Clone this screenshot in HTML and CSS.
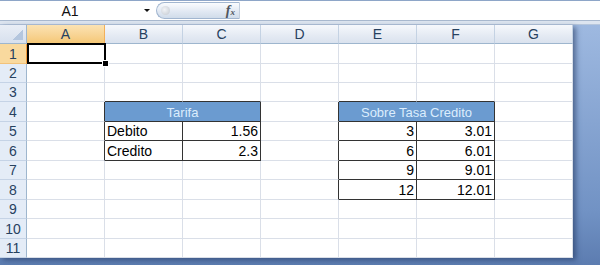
FILE: index.html
```html
<!DOCTYPE html>
<html lang="es">
<head>
    <meta charset="UTF-8">
    <title>Libro1</title>
    <link rel="stylesheet" href="styles.css">
</head>
<body>
    <div class="formula-bar">
        <div class="name-box">
            <span class="name">A1</span>
            <span class="drop"></span>
        </div>
        <div class="fx-pill">
            <span class="knob"></span>
            <span class="fx"><i>f</i><small>x</small></span>
        </div>
        <div class="formula-input"></div>
    </div>
    <div class="band"></div>

    <div class="sheet">
        <!-- cabecera -->
        <div class="corner"></div>
        <div class="col-head sel">A</div>
        <div class="col-head">B</div>
        <div class="col-head">C</div>
        <div class="col-head">D</div>
        <div class="col-head">E</div>
        <div class="col-head">F</div>
        <div class="col-head">G</div>

        <!-- fila 1 -->
        <div class="row-head sel">1</div>
        <div class="cell active"></div>
        <div class="cell"></div><div class="cell"></div><div class="cell"></div>
        <div class="cell"></div><div class="cell"></div><div class="cell"></div>

        <!-- fila 2 -->
        <div class="row-head">2</div>
        <div class="cell"></div><div class="cell"></div><div class="cell"></div><div class="cell"></div>
        <div class="cell"></div><div class="cell"></div><div class="cell"></div>

        <!-- fila 3 -->
        <div class="row-head">3</div>
        <div class="cell"></div>
        <div class="cell bb"></div><div class="cell bb"></div>
        <div class="cell"></div>
        <div class="cell bb"></div><div class="cell bb"></div>
        <div class="cell"></div>

        <!-- fila 4 -->
        <div class="row-head">4</div>
        <div class="cell br"></div>
        <div class="cell merged thead br bb">Tarifa</div>
        <div class="cell br"></div>
        <div class="cell merged thead br bb">Sobre Tasa Credito</div>
        <div class="cell"></div>

        <!-- fila 5 -->
        <div class="row-head">5</div>
        <div class="cell br"></div>
        <div class="cell br bb">Debito</div>
        <div class="cell num br bb">1.56</div>
        <div class="cell br"></div>
        <div class="cell num br bb">3</div>
        <div class="cell num br bb">3.01</div>
        <div class="cell"></div>

        <!-- fila 6 -->
        <div class="row-head">6</div>
        <div class="cell br"></div>
        <div class="cell br bb">Credito</div>
        <div class="cell num br bb">2.3</div>
        <div class="cell br"></div>
        <div class="cell num br bb">6</div>
        <div class="cell num br bb">6.01</div>
        <div class="cell"></div>

        <!-- fila 7 -->
        <div class="row-head">7</div>
        <div class="cell"></div><div class="cell"></div><div class="cell"></div>
        <div class="cell br"></div>
        <div class="cell num br bb">9</div>
        <div class="cell num br bb">9.01</div>
        <div class="cell"></div>

        <!-- fila 8 -->
        <div class="row-head">8</div>
        <div class="cell"></div><div class="cell"></div><div class="cell"></div>
        <div class="cell br"></div>
        <div class="cell num br bb">12</div>
        <div class="cell num br bb">12.01</div>
        <div class="cell"></div>

        <!-- filas 9 a 11 -->
        <div class="row-head">9</div>
        <div class="cell"></div><div class="cell"></div><div class="cell"></div><div class="cell"></div>
        <div class="cell"></div><div class="cell"></div><div class="cell"></div>
        <div class="row-head">10</div>
        <div class="cell"></div><div class="cell"></div><div class="cell"></div><div class="cell"></div>
        <div class="cell"></div><div class="cell"></div><div class="cell"></div>
        <div class="row-head">11</div>
        <div class="cell"></div><div class="cell"></div><div class="cell"></div><div class="cell"></div>
        <div class="cell"></div><div class="cell"></div><div class="cell"></div>
    </div>
</body>
</html>
```

FILE: styles.css
```css
*{
    margin: 0;
    padding: 0;
    box-sizing: border-box;
}
html,body{
    width: 600px;
    height: 265px;
    overflow: hidden;
}
body{
    font-family: "Liberation Sans", Arial, sans-serif;
    font-size: 13px;
    color: #000;
    background: linear-gradient(#a4bee4, #7192c4 80%, #5c7cb0);
}

/* barra de formulas */
.formula-bar{
    height: 21px;
    display: flex;
    background: #fff;
    border-top: 1px solid #8ea6c8;
    border-bottom: 1px solid #a9b9cf;
}
.name-box{
    width: 156px;
    display: flex;
    align-items: center;
}
.name{
    width: 140px;
    text-align: center;
    font-size: 14px;
    color: #111;
}
.drop{
    width: 0;
    height: 0;
    margin-left: 4px;
    border-left: 3px solid transparent;
    border-right: 3px solid transparent;
    border-top: 3px solid #111;
}
.fx-pill{
    width: 84px;
    margin: 1px 0;
    display: flex;
    align-items: center;
    justify-content: space-between;
    padding: 0 4px;
    border: 1px solid #a2b6d0;
    border-right-color: #c3cfde;
    border-radius: 9px 0 0 9px;
    background: linear-gradient(#fafcfe, #e2e9f3 55%, #d0dcea);
}
.knob{
    width: 9px;
    height: 9px;
    border-radius: 50%;
    background: radial-gradient(circle at 40% 40%, #f2f4f7, #c2c8d0);
}
.fx{
    font-family: "Liberation Serif", serif;
    font-size: 14px;
    color: #50555d;
    font-weight: bold;
}
.fx small{
    font-size: 9px;
    font-style: italic;
}
.formula-input{
    flex: 1;
}
.band{
    height: 4px;
    background: #dde5f0;
    border-bottom: 1px solid #b6c6dc;
}

/* hoja */
.sheet{
    width: 573px;
    display: grid;
    grid-template-columns: 27px repeat(7, 78px);
    grid-template-rows: 19px 20px 19px 19px 20px 19px 20px 19px 20px 19px 20px 19px;
    background: #fff;
    box-shadow: 3px 2px 5px rgba(30, 50, 90, 0.55);
}
.corner{
    background: linear-gradient(#e9eef6, #d7e0ee);
    border-right: 1px solid #9eb6ce;
    border-bottom: 1px solid #9eb6ce;
    position: relative;
}
.corner::after{
    content: "";
    position: absolute;
    right: 3px;
    bottom: 3px;
    width: 10px;
    height: 10px;
    background: linear-gradient(135deg, transparent 50%, #b4c6de 50%);
}
.col-head{
    display: flex;
    align-items: center;
    justify-content: center;
    font-size: 14px;
    color: #27415f;
    background: linear-gradient(#f6f8fc, #e4eaf3 60%, #dae2ee);
    border-right: 1px solid #c4d2e3;
    border-bottom: 1px solid #9eb6ce;
}
.col-head.sel{
    background: linear-gradient(#fbe3b3, #f8d597 50%, #f5c877);
    border-right-color: #f2b05a;
    border-bottom-color: #f29b3a;
}
.row-head{
    display: flex;
    align-items: center;
    justify-content: center;
    font-size: 14px;
    color: #27415f;
    background: #e4ecf7;
    border-right: 1px solid #9eb6ce;
    border-bottom: 1px solid #c5d3e6;
}
.row-head.sel{
    background: #f9d99e;
    border-right-color: #f29b3a;
    border-bottom-color: #f2c27a;
}
.cell{
    display: flex;
    align-items: flex-end;
    padding: 0 2px 1px 2px;
    font-size: 14px;
    white-space: nowrap;
    border-right: 1px solid #dadfe8;
    border-bottom: 1px solid #dadfe8;
}
.num{
    justify-content: flex-end;
}
.merged{
    grid-column: span 2;
}
.thead{
    justify-content: center;
    font-size: 13px;
    background: #6b9bd0;
    color: #dcedfd;
}
.br{
    border-right-color: #333;
}
.bb{
    border-bottom-color: #333;
}
.active{
    position: relative;
}
.active::before{
    content: "";
    position: absolute;
    left: 0;
    top: -1px;
    right: -2px;
    bottom: -1px;
    border: 2px solid #000;
}
.active::after{
    content: "";
    position: absolute;
    right: -4px;
    bottom: -3px;
    width: 5px;
    height: 5px;
    background: #000;
    outline: 1px solid #fff;
}
```
